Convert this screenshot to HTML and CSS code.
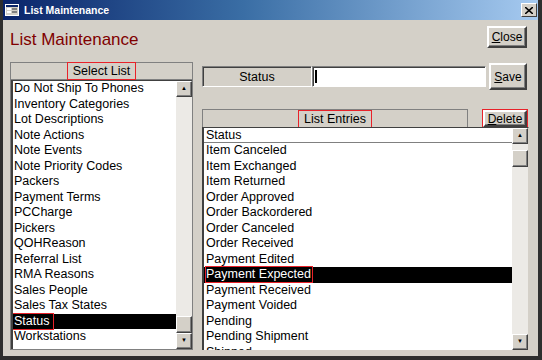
FILE: index.html
```html
<html>
	<head>
		<link rel="stylesheet" href="styles.css">
	</head>
	<body>
		<div class="window">
			<div class="titlebar">
				<svg class="appicon" width="14" height="12" viewBox="0 0 14 12">
					<rect x="0.5" y="0.5" width="13" height="11" fill="#d4d0c8" stroke="#fff"/>
					<rect x="1" y="1" width="12" height="2" fill="#0a246a"/>
					<rect x="2" y="4" width="4" height="2" fill="#fff"/>
					<rect x="7" y="4" width="5" height="2" fill="#808080"/>
					<rect x="2" y="7" width="4" height="2" fill="#fff"/>
					<rect x="7" y="7" width="5" height="2" fill="#808080"/>
				</svg>
				<span class="title">List Maintenance</span>
				<span class="xbtn">
					<svg width="8" height="7" viewBox="0 0 8 7"><path d="M0 0L8 7M8 0L0 7" stroke="#000" stroke-width="1.6"/></svg>
				</span>
			</div>
			<div class="content">
				<div class="toprow">
					<h1 class="heading">List Maintenance</h1>
					<button class="btn close"><u>C</u>lose</button>
				</div>
				<div class="main">
					<div class="leftpanel">
						<div class="panelhead"><span class="mark">Select List</span></div>
						<div class="listbox">
							<div class="items">
								<div class="row">Do Not Ship To Phones</div>
								<div class="row">Inventory Categories</div>
								<div class="row">Lot Descriptions</div>
								<div class="row">Note Actions</div>
								<div class="row">Note Events</div>
								<div class="row">Note Priority Codes</div>
								<div class="row">Packers</div>
								<div class="row">Payment Terms</div>
								<div class="row">PCCharge</div>
								<div class="row">Pickers</div>
								<div class="row">QOHReason</div>
								<div class="row">Referral List</div>
								<div class="row">RMA Reasons</div>
								<div class="row">Sales People</div>
								<div class="row">Sales Tax States</div>
								<div class="row selected"><span class="mark left">Status</span></div>
								<div class="row">Workstations</div>
							</div>
							<div class="scrollbar">
								<div class="sbtn">&#9650;</div>
								<div class="track thumb-bottom"><div class="thumb"></div></div>
								<div class="sbtn">&#9660;</div>
							</div>
						</div>
					</div>
					<div class="rightpanel">
						<div class="editrow">
							<div class="fieldlabel">Status</div>
							<div class="field"><span class="caret"></span></div>
							<button class="btn save"><u>S</u>ave</button>
						</div>
						<div class="entryhead">
							<div class="panelhead wide"><span class="mark">List Entries</span></div>
							<button class="btn delete"><u>D</u>elete</button>
						</div>
						<div class="listbox entries">
							<div class="items">
								<div class="colhead">Status</div>
								<div class="row">Item Canceled</div>
								<div class="row">Item Exchanged</div>
								<div class="row">Item Returned</div>
								<div class="row">Order Approved</div>
								<div class="row">Order Backordered</div>
								<div class="row">Order Canceled</div>
								<div class="row">Order Received</div>
								<div class="row">Payment Edited</div>
								<div class="row selected"><span class="mark">Payment Expected</span></div>
								<div class="row">Payment Received</div>
								<div class="row">Payment Voided</div>
								<div class="row">Pending</div>
								<div class="row">Pending Shipment</div>
								<div class="row">Shipped</div>
							</div>
							<div class="scrollbar">
								<div class="sbtn">&#9650;</div>
								<div class="track"><div class="thumb"></div></div>
								<div class="sbtn">&#9660;</div>
							</div>
						</div>
					</div>
				</div>
			</div>
		</div>
	</body>
</html>
```

FILE: styles.css
```css
* {
	box-sizing: border-box;
}
html, body {
	margin: 0;
	padding: 0;
	width: 542px;
	height: 360px;
	overflow: hidden;
	font-family: "Liberation Sans", Arial, sans-serif;
}
.window {
	width: 542px;
	height: 360px;
	background: #d4d0c8;
	border-left: 3px solid #2e2e2e;
	border-right: 4px solid #2e2e2e;
	border-bottom: 4px solid #2e2e2e;
	display: flex;
	flex-direction: column;
}
.titlebar {
	height: 20px;
	flex: none;
	background: linear-gradient(to right, #0a246a, #3a6ea5 45%, #a6caf0);
	display: flex;
	align-items: center;
	padding-left: 1px;
	padding-right: 1px;
}
.appicon {
	margin-right: 5px;
	margin-left: 1px;
}
.title {
	color: #fff;
	font-weight: bold;
	font-size: 10.5px;
	flex: 1;
}
.xbtn {
	width: 16px;
	height: 14px;
	background: #d4d0c8;
	border: 1px solid;
	border-color: #fff #404040 #404040 #fff;
	display: flex;
	align-items: center;
	justify-content: center;
}
.content {
	flex: 1;
	padding: 6px 9px 0 7px;
	display: flex;
	flex-direction: column;
}
.toprow {
	display: flex;
	justify-content: space-between;
	align-items: flex-start;
	height: 36px;
}
.heading {
	margin: 3px 0 0 0;
	font-weight: normal;
	font-size: 17px;
	color: #800000;
	line-height: 22px;
}
.btn {
	font-family: "Liberation Sans", Arial, sans-serif;
	font-size: 12px;
	background: #d4d0c8;
	color: #000;
	border: 2px solid;
	border-color: #fff #404040 #404040 #fff;
	box-shadow: inset -1px -1px 0 #808080;
	padding: 0;
}
.close {
	width: 40px;
	height: 22px;
	margin-right: 2px;
}
.main {
	display: flex;
	gap: 9px;
	height: 288px;
}
.leftpanel {
	width: 183px;
	flex: none;
	border: 1px solid #808080;
	display: flex;
	flex-direction: column;
}
.panelhead {
	height: 17px;
	flex: none;
	display: flex;
	justify-content: center;
	align-items: center;
	font-size: 12.5px;
	border-bottom: 1px solid #808080;
}
.mark {
	outline: 1px solid #e8222a;
	padding: 0 5px;
	line-height: 16px;
}
.listbox {
	flex: 1;
	display: flex;
	background: #fff;
	border-top: 1px solid #404040;
	border-left: 2px solid #404040;
	overflow: hidden;
}
.items {
	flex: 1;
	overflow: hidden;
	font-size: 12.5px;
}
.row {
	height: 15.5px;
	line-height: 15.5px;
	padding-left: 1px;
	white-space: nowrap;
}
.row.selected {
	background: #000;
	color: #fff;
}
.row .mark {
	padding: 0 1px 0 0;
	display: inline-block;
	line-height: 15px;
}
.row .mark.left {
	margin-left: -4px;
	padding-left: 4px;
	padding-right: 4px;
}
.scrollbar {
	width: 16px;
	flex: none;
	display: flex;
	flex-direction: column;
	background: #eceae6;
}
.sbtn {
	height: 16px;
	flex: none;
	background: #d4d0c8;
	border: 1px solid;
	border-color: #fff #404040 #404040 #fff;
	box-shadow: inset -1px -1px 0 #808080;
	font-size: 6px;
	line-height: 13px;
	text-align: center;
}
.track {
	flex: 1;
	display: flex;
	flex-direction: column;
	padding-top: 1px;
}
.track.thumb-bottom {
	justify-content: flex-end;
}
.thumb {
	height: 17px;
	background: #d4d0c8;
	border: 1px solid;
	border-color: #fff #404040 #404040 #fff;
	box-shadow: inset -1px -1px 0 #808080;
}
.rightpanel {
	width: 327px;
	flex: none;
	display: flex;
	flex-direction: column;
}
.editrow {
	display: flex;
	align-items: center;
	height: 27px;
	margin-top: 1px;
}
.fieldlabel {
	width: 110px;
	height: 21px;
	font-size: 12.5px;
	display: flex;
	align-items: center;
	justify-content: center;
	border: 1px solid;
	border-color: #808080 #fff #fff #808080;
	box-shadow: inset 1px 1px 0 #404040;
}
.field {
	width: 174px;
	height: 21px;
	background: #fff;
	border: 1px solid;
	border-color: #808080 #fff #fff #808080;
	box-shadow: inset 1px 1px 0 #404040;
	padding: 3px 2px;
}
.caret {
	display: block;
	width: 2px;
	height: 13px;
	background: #000;
}
.save {
	width: 38px;
	height: 27px;
	margin-left: 3px;
}
.entryhead {
	display: flex;
	margin-top: 19px;
	height: 18px;
	flex: none;
}
.panelhead.wide {
	width: 266px;
	height: 18px;
	border: 1px solid #808080;
	border-bottom: none;
	background: #d4d0c8;
}
.delete {
	width: 44px;
	height: 17px;
	margin-left: 15px;
	margin-top: 1px;
	outline: 1px solid #e8222a;
	line-height: 12px;
}
.entries {
	border-right: 1px solid #d4d0c8;
}
.entries .row {
	padding-left: 2px;
}
.colhead {
	height: 15px;
	line-height: 15px;
	padding-left: 2px;
	border-bottom: 1px solid #808080;
	margin-right: -1px;
}
.entries .track {
	padding-top: 6px;
}
```
